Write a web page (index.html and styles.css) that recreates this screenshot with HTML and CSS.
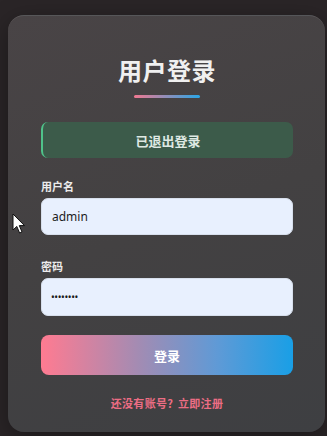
FILE: index.html
```html
<!DOCTYPE html>
<html lang="zh-CN">
<head>
<meta charset="utf-8">
<title>用户登录</title>
<link rel="stylesheet" href="styles.css">
</head>
<body>
<div class="card">
  <h1 class="title">用户登录</h1>
  <div class="title-bar"></div>
  <div class="alert">已退出登录</div>
  <div class="group">
    <label class="label">用户名</label>
    <div class="input">admin</div>
  </div>
  <div class="group">
    <label class="label">密码</label>
    <div class="input pass">••••••••</div>
  </div>
  <button class="btn">登录</button>
  <p class="link">还没有账号? 立即注册</p>
</div>
<svg class="cursor" width="14" height="22" viewBox="0 0 14 22">
  <path d="M1 1 L1 17 L4.8 13.4 L7.6 20 L10 19 L7.3 12.6 L12.5 12.6 Z" fill="#fff" stroke="#111" stroke-width="1"/>
</svg>
</body>
</html>
```
FILE: styles.css
```css
html, body {
  margin: 0;
  padding: 0;
}
body {
  background: #2a2527;
  height: 436px;
  overflow: hidden;
  font-family: "Noto Sans CJK SC", "Noto Sans", sans-serif;
  position: relative;
}
.card {
  margin: 15px 2px 0 8px;
  height: 417px;
  box-sizing: border-box;
  padding: 39px 32px 0 33px;
  border-radius: 16px;
  background: linear-gradient(160deg, #494446 0%, #434142 50%, #3e3f42 100%);
  border-top: 1px solid rgba(255,255,255,0.12);
  box-shadow: 0 6px 24px rgba(0,0,0,0.35);
  display: flex;
  flex-direction: column;
}
.title {
  margin: 0;
  text-align: center;
  font-size: 24px;
  line-height: 30px;
  font-weight: 700;
  color: #f0f0f0;
  letter-spacing: 0.5px;
}
.title-bar {
  align-self: center;
  width: 66px;
  height: 3px;
  margin-top: 10px;
  border-radius: 2px;
  background: linear-gradient(90deg, #f07890, #2aa6e6);
}
.alert {
  margin-top: 24px;
  height: 36px;
  box-sizing: border-box;
  border-radius: 7px;
  background: #3c5b4a;
  border-left: 2px solid #4fc38a;
  color: #dfe9e3;
  font-size: 13px;
  font-weight: 700;
  display: flex;
  align-items: center;
  justify-content: center;
}
.group {
  display: flex;
  flex-direction: column;
  margin-top: 20px;
}
.group + .group {
  margin-top: 23px;
}
.label {
  font-size: 11px;
  line-height: 16px;
  font-weight: 700;
  color: #ececec;
  margin-bottom: 4px;
}
.input {
  height: 37px;
  box-sizing: border-box;
  border-radius: 7px;
  background: #e8f0fe;
  border: 1px solid #d7dfec;
  padding: 0 10px;
  display: flex;
  align-items: center;
  font-family: "Noto Sans", sans-serif;
  font-size: 12px;
  color: #1c1c1c;
}
.pass {
  height: 38px;
  font-size: 10px;
  letter-spacing: -0.4px;
  padding-left: 9px;
}
.btn {
  margin-top: 19px;
  height: 40px;
  border: none;
  border-radius: 8px;
  background: linear-gradient(90deg, #ff7b91 0%, #a08cb4 40%, #5f9ad6 70%, #199fe6 100%);
  color: #fff;
  font-family: "Noto Sans CJK SC", sans-serif;
  font-size: 13px;
  font-weight: 700;
  padding: 0;
}
.link {
  margin: 20px 0 0;
  text-align: center;
  font-size: 11px;
  line-height: 16px;
  font-weight: 700;
  color: #ec6d84;
  letter-spacing: 0.3px;
  word-spacing: 2px;
}
.cursor {
  position: absolute;
  left: 12px;
  top: 213px;
}
```
